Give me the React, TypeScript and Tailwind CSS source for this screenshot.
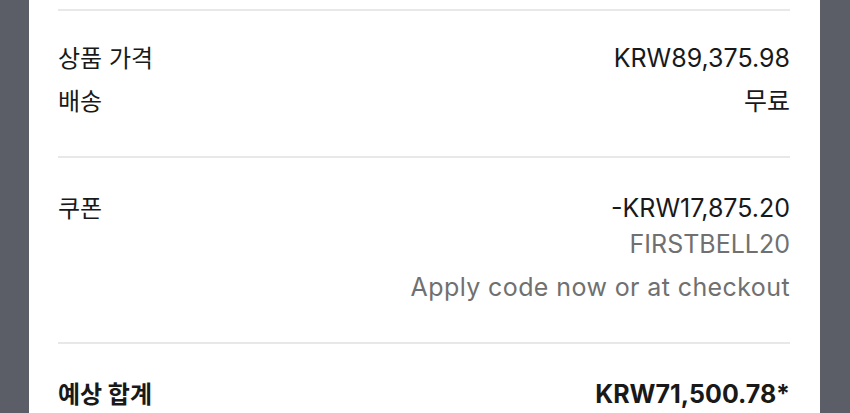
import React from "react";

const FONT = "font-['Inter','Noto_Sans_CJK_KR',sans-serif]";

function Divider() {
  return <div className="h-[2px] bg-[#e8e8e8]" />;
}

function Row({ label, value }: { label: string; value: string }) {
  return (
    <div className="flex items-baseline justify-between leading-[42px]">
      <span className="text-[24px]">{label}</span>
      <span>{value}</span>
    </div>
  );
}

export default function App() {
  return (
    <div className={`flex h-[413px] w-[850px] overflow-hidden bg-[#5b5e66] ${FONT}`}>
      <div className="ml-[29px] mr-[30px] flex-1 bg-white pl-[29px] pr-[30px] pt-[9px] text-[25px] text-[#191919]">
        <Divider />

        {/* Price */}
        <div className="pt-[26px] pb-[33px]">
          <Row label="상품 가격" value="KRW89,375.98" />
          <Row label="배송" value="무료" />
        </div>

        <Divider />

        {/* Coupon */}
        <div className="flex items-baseline justify-between pt-[32px] pb-[37px] leading-[36px]">
          <span className="text-[24px]">쿠폰</span>
          <div className="flex flex-col items-end">
            <span>-KRW17,875.20</span>
            <span className="text-[#707070]">FIRSTBELL20</span>
            <span className="mt-[7px] tracking-[0.4px] text-[#707070]">
              Apply code now or at checkout
            </span>
          </div>
        </div>

        <Divider />

        {/* Total */}
        <div className="flex items-baseline justify-between pt-[32px] font-bold leading-[36px]">
          <span className="text-[24px]">예상 합계</span>
          <span>KRW71,500.78*</span>
        </div>
      </div>
    </div>
  );
}
